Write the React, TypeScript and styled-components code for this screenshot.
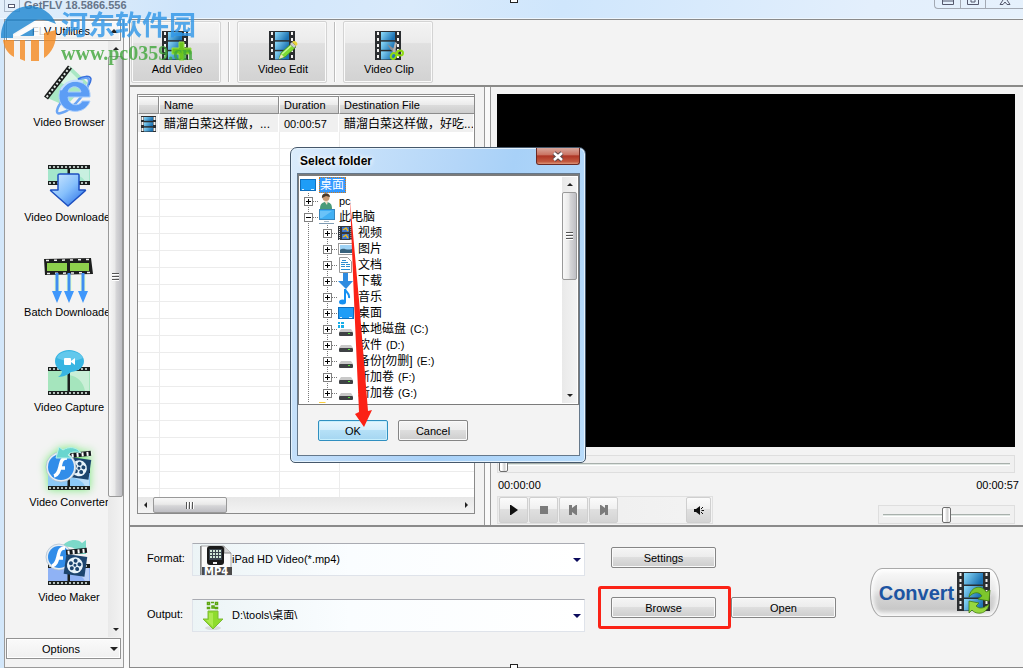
import React from "react";
import styled, { createGlobalStyle, css } from "styled-components";

const Global = createGlobalStyle`
  *, *::before, *::after { box-sizing: border-box; }
  body { margin: 0; }
  body, button, input, select, textarea {
    font-family: "Liberation Sans", "Noto Sans CJK SC", sans-serif;
    font-size: 11px;
    line-height: 14px;
    color: #000;
  }
  button { padding: 0; border: 0; background: none; cursor: pointer; }
  ul { list-style: none; margin: 0; padding: 0; }
  svg { display: block; flex: none; }
`;

/* ---------- window frame ---------- */

const Window = styled.div`
  position: relative;
  display: flex;
  flex-direction: column;
  min-height: 100vh;
  overflow: hidden;
  background: #d3e7fa;
`;

const TitleBar = styled.header`
  display: flex;
  align-items: flex-start;
  height: 19px;
  padding-left: 4px;
  border-bottom: 1px solid #eef6fd;
  background: linear-gradient(100deg, #e3effa 0%, #cfe5fb 18%, #d9eafb 40%, #cfe6fc 55%, #e3effc 85%, #e6f1fc 100%);
`;

const SystemMenu = styled.button`
  display: grid;
  place-items: center;
  width: 16px;
  height: 12px;
  border: 1px solid #a9b8c9;
  border-top: 0;
`;

const WindowTitle = styled.h1`
  flex: 1;
  margin: 0;
  padding-left: 4px;
  font-size: 11px;
  line-height: 11px;
  color: #66758a;
`;

const CaptionButtons = styled.div`
  display: flex;
  height: 9px;
  border: 1px solid #a3a9b3;
  border-width: 0 0 1px 1px;
  border-radius: 0 0 0 4px;
`;

const CaptionButton = styled.button<{ $wide?: boolean }>`
  display: flex;
  justify-content: center;
  width: ${(p) => (p.$wide ? 38 : 25)}px;
  height: 8px;
  overflow: hidden;
  & + & { border-left: 1px solid #a3a9b3; }
`;

const Client = styled.div`
  flex: 1;
  display: flex;
  gap: 5px;
  padding-left: 4px;
  background: linear-gradient(90deg, #d3e7fa 4px, #fafafa 4px);
`;

/* ---------- shared pieces ---------- */

const raised = css`
  background: linear-gradient(#f5f5f5, #ececec 48%, #dedede 50%, #cdcdcd);
  box-shadow: inset 0 0 0 1px #fafafa;
`;

const PushButton = styled.button<{ $primary?: boolean; $small?: boolean }>`
  ${raised}
  width: ${(p) => (p.$small ? 70 : 105)}px;
  height: 21px;
  border: 1px solid #858585;
  border-radius: 2px;
  ${(p) =>
    p.$primary &&
    css`
      border-color: #2f8fc0;
      background: linear-gradient(#e6f5fd, #d3edfb 48%, #b5e0f7 50%, #a5d6f1);
      box-shadow: inset 0 0 0 1px #c8effd;
    `}
`;

const Arrow = styled.span<{ $dir: "up" | "down" | "left" | "right"; $big?: boolean }>`
  width: 0;
  height: 0;
  border: ${(p) => (p.$big ? 4 : 3)}px solid transparent;
  ${(p) => p.$dir === "up" && "border-top-width: 0; border-bottom-color: #222;"}
  ${(p) => p.$dir === "down" && "border-bottom-width: 0; border-top-color: #222;"}
  ${(p) => p.$dir === "left" && "border-left-width: 0; border-right-color: #222;"}
  ${(p) => p.$dir === "right" && "border-right-width: 0; border-left-color: #222;"}
`;

const ScrollTrack = styled.div<{ $horizontal?: boolean }>`
  display: flex;
  flex: none;
  flex-direction: ${(p) => (p.$horizontal ? "row" : "column")};
  ${(p) => (p.$horizontal ? "height: 16px;" : "width: 15px;")}
  background: ${(p) => (p.$horizontal ? "linear-gradient(#e7e7e7, #f3f3f3)" : "linear-gradient(90deg, #e9e9e9, #f3f3f3)")};
`;

const ScrollArrow = styled.button`
  display: grid;
  place-items: center;
  flex: none;
  width: 15px;
  height: 15px;
`;

const ScrollThumb = styled.div<{ $horizontal?: boolean; $size: string }>`
  display: grid;
  place-items: center;
  flex: none;
  ${(p) => (p.$horizontal ? "width" : "height")}: ${(p) => p.$size};
  border: 1px solid #999;
  border-radius: 2px;
  background: linear-gradient(${(p) => (p.$horizontal ? "180deg" : "90deg")}, #f8f8f8, #e9e9e9 45%, #d6d6d8 55%, #bebec3);
`;

const Grip = styled.span<{ $horizontal?: boolean }>`
  ${(p) => (p.$horizontal ? "width: 8px; height: 7px;" : "width: 7px; height: 8px;")}
  background: repeating-linear-gradient(${(p) => (p.$horizontal ? "90deg" : "180deg")}, #555 0 1px, #fff 1px 2px, transparent 2px 3px);
`;

const Fill = styled.div`
  flex: 1;
`;

function ScrollBar(props: { horizontal?: boolean; size: string; label: string }) {
  const h = props.horizontal;
  return (
    <ScrollTrack $horizontal={h}>
      <ScrollArrow aria-label={`${props.label} back`}>
        <Arrow $dir={h ? "left" : "up"} />
      </ScrollArrow>
      <ScrollThumb $horizontal={h} $size={props.size}>
        <Grip $horizontal={h} />
      </ScrollThumb>
      <Fill />
      <ScrollArrow aria-label={`${props.label} forward`}>
        <Arrow $dir={h ? "right" : "down"} />
      </ScrollArrow>
    </ScrollTrack>
  );
}

/* ---------- sidebar ---------- */

const Sidebar = styled.nav`
  display: flex;
  flex-direction: column;
  flex: none;
  width: 120px;
  border: 1px solid #9a9a9a;
  background: #f3f3f3;
`;

const SectionButton = styled.button`
  display: flex;
  align-items: center;
  flex: none;
  height: 21px;
  margin: 0 2px 0 1px;
  padding: 0 2px 0 5px;
  border: 1px solid #929292;
  background: linear-gradient(#fafafa, #f0f0f0);
  box-shadow: inset 0 0 0 1px #fff;
  span:first-child { flex: 1; text-align: center; }
`;

const SidebarBody = styled.div`
  flex: 1;
  display: flex;
  margin-bottom: 1px;
`;

const ToolList = styled.ul`
  flex: 1;
  min-width: 0;
  display: flex;
  flex-direction: column;
  gap: 31px;
  padding-top: 24px;
  overflow: hidden;
`;

const ToolItem = styled.button<{ $active?: boolean }>`
  display: flex;
  flex-direction: column;
  align-items: center;
  width: 128px;
  white-space: nowrap;
  ${(p) => p.$active && "svg { filter: drop-shadow(0 0 4px #7dea7d); }"}
`;

const SidebarFooter = styled.div`
  display: flex;
  flex-direction: column;
  height: 29px;
`;

/* ---------- toolbar ---------- */

const Main = styled.main`
  flex: 1;
  min-width: 0;
  display: flex;
  flex-direction: column;
  border: 1px solid #8a8a8a;
  border-right: 0;
  background: #f3f3f3;
`;

const Toolbar = styled.div`
  display: flex;
  height: 67px;
  padding: 1px 1px 2px;
  border-bottom: 2px solid #8a8a88;
`;

const ToolbarButton = styled.button`
  ${raised}
  display: flex;
  flex-direction: column;
  align-items: center;
  gap: 1px;
  width: 90px;
  height: 62px;
  padding: 9px 0 0 2px;
  border: 1px solid #d3d3d3;
  border-radius: 2px;
  background: linear-gradient(#f3f3f3, #ebebeb 34%, #e0e0e0 36%, #d2d2d2);
`;

const ToolbarDivider = styled.span`
  width: 2px;
  height: 60px;
  margin: 1px 7px;
  background: linear-gradient(90deg, #bdbdbd 1px, #fff 1px);
`;

/* ---------- file list ---------- */

const Workspace = styled.div`
  flex: 1;
  display: flex;
`;

const FilePane = styled.section`
  display: flex;
  flex: none;
  width: 355px;
  padding: 7px 9px 11px 7px;
  border-right: 1px solid #999;
`;

const FileBox = styled.div`
  flex: 1;
  min-width: 0;
  display: flex;
  flex-direction: column;
  border: 1px solid #8a8a8a;
  background: #fff;
`;

const FileGrid = styled.div`
  flex: 1;
  overflow: hidden;
  padding-top: 1px;
  background:
    linear-gradient(90deg, transparent 21px, #ececec 21px 22px, transparent 22px 141px, #ececec 141px 142px, transparent 142px 201px, #ececec 201px 202px, transparent 202px),
    repeating-linear-gradient(transparent 0 2px, #ececec 2px 3px, transparent 3px 17px);
`;

const FileTable = styled.table`
  table-layout: fixed;
  width: 100%;
  border-collapse: separate;
  border-spacing: 0;
  th {
    height: 18px;
    padding: 0 4px;
    border: 1px solid #8c8c8c;
    border-left-color: #fff;
    text-align: left;
    font-weight: 400;
    background: linear-gradient(#fafafa, #ebebeb 48%, #dcdcdc 50%, #cdcdcd);
  }
  th:last-child { border-right: 0; }
  td {
    height: 18px;
    padding: 1px 0 0 5px;
    overflow: hidden;
    white-space: nowrap;
    background: #f0f0f0;
    border-right: 1px solid #fff;
  }
  td:first-child { padding-left: 3px; }
`;

const Cjk = styled.span`
  font-size: 12px;
  line-height: 16px;
`;

const PaneGap = styled.div`
  width: 5px;
  background: #fafafa;
`;

/* ---------- player ---------- */

const Player = styled.section`
  flex: 1;
  min-width: 0;
  display: flex;
  flex-direction: column;
  padding: 7px 4px 1px 6px;
  border-left: 1px solid #999;
`;

const Screen = styled.div`
  flex: 1;
  margin: 0 4px 8px 0;
  background: #000;
`;

const Slider = styled.input<{ $volume?: boolean }>`
  appearance: none;
  display: block;
  height: ${(p) => (p.$volume ? 19 : 18)}px;
  margin: 0 4px 0 0;
  padding: 0 4px;
  border: 1px solid #dedede;
  background: #f0f0f0;
  width: ${(p) => (p.$volume ? "137px" : "auto")};
  ${(p) => !p.$volume && "padding-left: 1px;"}
  &::-webkit-slider-runnable-track {
    height: 16px;
    background: linear-gradient(transparent 7px, #a8b0ac 7px 8px, #dfe6e2 8px 9px, #fff 9px 10px, transparent 10px);
  }
  &::-webkit-slider-thumb {
    appearance: none;
    width: 9px;
    height: 16px;
    border: 1px solid #6d6d6d;
    border-radius: 2px;
    background: linear-gradient(90deg, #fff 2px, #e6e6e6 3px, #cfcfcf 5px, #fff 6px);
  }
`;

const Times = styled.div`
  display: flex;
  justify-content: space-between;
  margin: 5px 0 4px;
  padding-left: 1px;
`;

const Controls = styled.div`
  display: flex;
  justify-content: space-between;
  align-items: flex-end;
`;

const Transport = styled.div`
  display: flex;
  gap: 1px;
  width: 216px;
  height: 28px;
  padding: 0 1px;
  border: 1px solid #e0e0e0;
  background: linear-gradient(90deg, #ececec, #f3f3f3);
`;

const TransportButton = styled.button`
  display: grid;
  place-items: center;
  width: 29px;
  height: 26px;
  border: 1px solid #cfcfcf;
  border-radius: 2px;
  background: linear-gradient(#fbfbfb, #f0f0f0 44%, #e0e0e0 46%, #d4d4d4);
  &:last-child { width: 25px; margin-left: auto; }
`;

/* ---------- output settings ---------- */

const OutputPanel = styled.section`
  display: flex;
  align-items: flex-start;
  padding: 16px 23px 35px 17px;
  border-top: 2px solid #8a8a8a;
`;

const Fields = styled.div`
  flex: 0 1 438px;
  display: grid;
  grid-template-columns: 45px 1fr;
  align-items: center;
  row-gap: 23px;
`;

const FieldLabel = styled.label`
  padding-bottom: 3px;
`;

const Combo = styled.div`
  display: flex;
  align-items: center;
  height: 33px;
  padding: 0 3px 0 7px;
  border: 1px solid #dfe3ea;
  border-top-color: #a9abb2;
  background: linear-gradient(90deg, #ecf4f6, #fafdff 40%, #fff);
`;

const ComboSelect = styled.select`
  appearance: none;
  flex: 1;
  min-width: 0;
  height: 20px;
  padding: 0 0 2px;
  border: 0;
  outline: 0;
  background: transparent;
`;

const ComboArrow = styled.span`
  border: 4px solid transparent;
  border-top-color: #0b0b5c;
  border-bottom: 0;
`;

const Actions = styled.div`
  display: grid;
  grid-template-columns: 105px 105px;
  gap: 29px 15px;
  padding: 4px 0 0 26px;
`;

const Highlighted = styled.div`
  grid-column: 1;
  position: relative;
  &::after {
    content: "";
    position: absolute;
    inset: -11px -15px -11px -13px;
    border: 3px solid #fb2216;
    border-radius: 3px;
    pointer-events: none;
  }
`;

const ConvertButton = styled.button`
  display: flex;
  align-items: center;
  justify-content: center;
  gap: 3px;
  width: 130px;
  height: 49px;
  margin: 25px 0 0 auto;
  border: 1px solid #a9a9a9;
  border-radius: 12px / 22px;
  background: linear-gradient(#fafafa, #e8e8e8 45%, #d4d4d4 60%, #c8c8c8 85%, #e4e4e4);
  box-shadow: inset 0 0 5px 2px #fff;
  font-size: 20px;
  font-weight: 700;
  color: #1d54a2;
`;

/* ---------- select folder dialog ---------- */

const Dialog = styled.div`
  position: absolute;
  left: 290px;
  top: 147px;
  width: 296px;
  display: flex;
  flex-direction: column;
  padding: 0 5px 6px 6px;
  border: 1px solid #46586b;
  border-radius: 7px 7px 5px 5px;
  background: linear-gradient(105deg, #dcecfb 0%, #c5e0fa 20%, #b4d6f8 45%, #a8d1f8 60%, #b9dcfb 100%);
  box-shadow: inset 0 0 0 1px #e4f2fd;
`;

const DialogHead = styled.div`
  display: flex;
  justify-content: space-between;
  height: 25px;
`;

const DialogTitle = styled.h2`
  margin: 0;
  padding: 6px 0 0 3px;
  font-size: 12px;
  line-height: 14px;
  text-shadow: 0 0 5px #fff, 0 0 5px #fff;
`;

const CloseButton = styled.button`
  display: grid;
  place-items: center;
  width: 44px;
  height: 17px;
  border: 1px solid #6b2a25;
  border-top: 0;
  border-radius: 0 0 3px 3px;
  background: linear-gradient(#d9a79c, #c9705e 45%, #ad3424 48%, #c2593f 85%, #dd9679);
`;

const DialogBody = styled.div`
  border: 1px solid #65788b;
  background: #f3f3f3;
`;

const TreeBox = styled.div`
  display: flex;
  height: 231px;
  padding: 1px 1px 1px 0;
  border: 1px solid #7b7b7b;
  border-top-width: 2px;
  background: #fff;
`;

const Tree = styled.ul`
  flex: 1;
  overflow: hidden;
`;

const TreeRow = styled.li`
  display: flex;
  align-items: center;
  height: 16px;
  white-space: nowrap;
`;

const Guide = styled.span<{ $branch?: boolean }>`
  display: grid;
  place-items: center;
  width: 19px;
  height: 16px;
  background:
    repeating-linear-gradient(#777 0 1px, transparent 1px 2px) 9px 0 / 1px 16px no-repeat
    ${(p) => p.$branch && ", repeating-linear-gradient(90deg, #777 0 1px, transparent 1px 2px) 14px 8px / 6px 1px no-repeat"};
`;

const Expander = styled.button<{ $open?: boolean }>`
  width: 9px;
  height: 9px;
  border: 1px solid #808080;
  background:
    linear-gradient(#000, #000) center / 5px 1px no-repeat,
    ${(p) => !p.$open && "linear-gradient(#000, #000) center / 1px 5px no-repeat,"}
    #fff;
`;

const TreeLabel = styled.span<{ $selected?: boolean }>`
  display: flex;
  gap: 4px;
  align-items: center;
  margin-left: ${(p) => (p.$selected ? 3 : 4)}px;
  line-height: 16px;
  ${(p) =>
    p.$selected &&
    css`
      padding: 0 2px 0 1px;
      background: #3399ff;
      color: #fff;
      outline: 1px dotted #d07a1c;
      outline-offset: -1px;
    `}
`;

const DialogFoot = styled.div`
  display: flex;
  gap: 10px;
  padding: 15px 20px 14px;
`;

/* ---------- overlays ---------- */

const Pointer = styled.svg`
  position: absolute;
  left: 345px;
  top: 198px;
  pointer-events: none;
`;

const Watermark = styled.div`
  position: absolute;
  left: 0;
  top: 6px;
  display: flex;
  gap: 4px;
  opacity: 0.8;
  pointer-events: none;
`;

const WatermarkName = styled.div`
  font: 700 27px/36px "Noto Sans CJK SC", sans-serif;
  color: #2e96e8;
`;

const WatermarkSite = styled.div`
  font: 700 20px/22px "Liberation Serif", serif;
  color: #3fa63a;
`;

const ResizeMark = styled.span<{ $bottom?: boolean }>`
  position: absolute;
  left: calc(50% - 2px);
  ${(p) => (p.$bottom ? "bottom: -4px;" : "top: -5px;")}
  width: 8px;
  height: 8px;
  border: 1px solid #222;
  background: #fff;
`;

/* ---------- drawings ---------- */

function FilmStrip({ x = 0, y = 0, w = 26, h = 29, id }: { x?: number; y?: number; w?: number; h?: number; id: string }) {
  const count = Math.floor(h / 5);
  const step = h / count;
  const side = Math.round(w * 0.22);
  const frame = h / 3;
  return (
    <g transform={`translate(${x} ${y})`}>
      <defs>
        <linearGradient id={id} x1="0" y1="0" x2="1" y2="0.4">
          <stop offset="0" stopColor="#8edcfb" />
          <stop offset="1" stopColor="#1d73b3" />
        </linearGradient>
      </defs>
      <rect width={w} height={h} fill="#2b2e31" />
      {Array.from({ length: count }, (_, i) => (
        <g key={i} fill="#f4f4f4">
          <rect x={side / 2 - 1} y={Math.round(i * step + 1)} width="2" height="3" />
          <rect x={w - side / 2 - 1} y={Math.round(i * step + 1)} width="2" height="3" />
        </g>
      ))}
      {[0, 1, 2].map((i) => (
        <rect key={i} x={side} y={i * frame + 1} width={w - 2 * side} height={frame - 1.5} fill={`url(#${id})`} />
      ))}
    </g>
  );
}

const AddVideoIcon = () => (
  <svg width="30" height="30" viewBox="0 0 30 30">
    <FilmStrip id="fa" />
    <path d="M17 11h5v6h7v6h-7v6h-5v-6h-7v-6h7z" fill="#6cc51e" stroke="#9be04c" />
  </svg>
);

const EditVideoIcon = () => (
  <svg width="30" height="30" viewBox="0 0 30 30">
    <FilmStrip id="fe" x={1} />
    <path d="M11 28l2-6L24 12l4 4-11 10z" fill="#7ddb33" stroke="#3f8d18" strokeWidth=".7" />
    <path d="M14 23L25 13" stroke="#c9f79a" strokeWidth="1.5" />
    <path d="M22 13l2-2 4 4-2 2z" fill="#ccc" stroke="#777" strokeWidth=".5" />
    <path d="M24 11l1.500-1c2-.5 4 1.500 4 3.500L28 15z" fill="#e8d43c" />
    <path d="M11 28l2-5 3 3z" fill="#f1e4b5" />
  </svg>
);

const ClipVideoIcon = () => (
  <svg width="30" height="30" viewBox="0 0 30 30">
    <FilmStrip id="fc" x={1} />
    <path d="M13 13l9 6 3 3-3 1-5-4z" fill="#8f8f8f" />
    <path d="M21 11l2 1-2 9-3 2z" fill="#b5b5b5" />
    <ellipse cx="19.500" cy="25" rx="2.500" ry="3" fill="none" stroke="#8edb12" strokeWidth="2" transform="rotate(30 19.500 25)" />
    <ellipse cx="26" cy="22" rx="3" ry="2.500" fill="none" stroke="#8edb12" strokeWidth="2" />
  </svg>
);

function GreenFilm({ y, h, tint = "#a4e6cb" }: { y: number; h: number; tint?: string }) {
  return (
    <g>
      <rect x="11" y={y} width="42" height={h} fill={tint} />
      <path d={`M32 ${y + 4}h20v${h - 8}h-4q-3-${h - 14}-16-${h - 12}z`} fill="#fff" opacity=".4" />
      <rect x="11" y={y} width="42" height="4" fill="#1b1f1e" />
      <rect x="11" y={y + h - 4} width="42" height="4" fill="#1b1f1e" />
      <rect x="30.500" y={y} width="2.500" height={h} fill="#1b1f1e" />
      <path d={`M12 ${y + 2}h40M12 ${y + h - 2}h40`} stroke="#e8f5ef" strokeWidth="1.500" strokeDasharray="2 2" />
    </g>
  );
}

const BrowserIcon = () => (
  <svg width="64" height="50" viewBox="0 0 64 50">
    <path d="M33 1l18 17-22 23L8 32z" fill="#a9e8c4" />
    <path d="M32 5l14 14-13 4-10-6z" fill="#d8f6e4" />
    <path d="M33 2L9 33" stroke="#191c1b" strokeWidth="5" />
    <path d="M33 2L9 33" stroke="#e5eee9" strokeWidth="2" strokeDasharray="2 2" />
    <path d="M25 36c-6 8-7 14-1 12 6-1 14-8 21-17s9-17 5-18c-2-1-5 0-9 2" fill="none" stroke="#6aa5f5" strokeWidth="2.500" />
    <path d="M53 32H31c0 9 12 10 14 4h8c-5 16-32 13-31-6 1-19 33-18 31 2zM31 27h13c-1-7-12-7-13 0z" fill="#5c9df5" stroke="#a7cdfd" />
    <path d="M24 25c4-8 14-12 22-8" fill="none" stroke="#c3ddff" strokeWidth="2" />
    <path d="M41 14c5-3 12-4 13 0 0 2-1 4-2 6" fill="none" stroke="#3a72dd" strokeWidth="1.500" />
  </svg>
);

const DownloaderIcon = () => (
  <svg width="64" height="50" viewBox="0 0 64 50">
    <defs>
      <linearGradient id="dl" x1="0" y1="0" x2="1" y2="1">
        <stop offset="0" stopColor="#d4ebff" />
        <stop offset=".5" stopColor="#86c0fc" />
        <stop offset="1" stopColor="#1c64e4" />
      </linearGradient>
    </defs>
    <GreenFilm y={5} h={20} />
    <path d="M23 14h18q1 0 1 1v15h6q1 0 0 1L31 46 14 31q-1-1 0-1h7V15q0-1 2-1z" fill="url(#dl)" stroke="#1c4fc0" strokeWidth="1.500" strokeLinejoin="round" />
  </svg>
);

const BatchIcon = () => (
  <svg width="64" height="50" viewBox="0 0 64 50">
    <path d="M7 4l47-1 2 16-48 1z" fill="#1c1e1d" />
    <path d="M9 5.500l45-1M10 18.500l44-1" stroke="#eee" strokeWidth="1.500" strokeDasharray="3 5" />
    <rect x="10" y="8" width="20" height="8" fill="#8ed04d" />
    <rect x="33" y="8" width="19" height="8" fill="#8ed04d" />
    <path d="M20 20v20M32 20v20M46 20v20" stroke="#e8fbd8" strokeWidth="6" />
    <path d="M20 18v20M32 18v20M46 18v20" stroke="#3f8ff0" strokeWidth="3" />
    <path d="M15 36h10l-5 12zM27 36h10l-5 12zM41 36h10l-5 12z" fill="#3f97fb" />
  </svg>
);

const CaptureIcon = () => (
  <svg width="64" height="50" viewBox="0 0 64 50">
    <GreenFilm y={17} h={28} tint="#a5e5bd" />
    <path d="M32 0c8 0 15 5 15 11s-5 10-13 11c-2 2-7 5-13 5 3-2 4-4 4-6-5-2-7-6-7-10C18 5 24 0 32 0z" fill="#38b5e2" />
    <path d="M20 8c2-9 22-9 26 0-8 4-18 4-26 0z" fill="#7fd6f3" opacity=".6" />
    <rect x="27" y="8" width="7" height="7" rx="1" fill="#fff" />
    <path d="M34 11l4-3v7l-4-3z" fill="#fff" />
  </svg>
);

function Clapper({ x, y }: { x: number; y: number }) {
  return (
    <g transform={`translate(${x} ${y}) rotate(8)`}>
      <rect y="4" width="21" height="20" fill="#1d456f" />
      <rect width="21" height="5" fill="#15191d" transform="rotate(-14 0 5)" />
      <path d="M1 2.500l20-5" stroke="#fff" strokeWidth="4" strokeDasharray="2 3" />
      <circle cx="10" cy="14" r="8" fill="#e9f4fb" />
      <g fill="#1d456f">
        <circle cx="10" cy="14" r="1.500" />
        <circle cx="10" cy="9.500" r="2" />
        <circle cx="14.300" cy="12.500" r="2" />
        <circle cx="12.700" cy="17.500" r="2" />
        <circle cx="7.300" cy="17.500" r="2" />
        <circle cx="5.700" cy="12.500" r="2" />
      </g>
    </g>
  );
}

const FlashDisc = ({ cx, cy, r }: { cx: number; cy: number; r: number }) => (
  <g>
    <circle cx={cx} cy={cy} r={r} fill="#e8eef4" stroke="#a9bccb" strokeWidth=".7" />
    <circle cx={cx} cy={cy} r={r - 2} fill="#318de9" />
    <path d={`M${cx + 6} ${cy - 9}c-6 0-6 5-7 9s-2 8-6 9M${cx - 2} ${cy + 1}h6`} fill="none" stroke="#fff" strokeWidth="3.500" />
  </g>
);

const ConverterIcon = () => (
  <svg width="64" height="50" viewBox="0 0 64 50" overflow="visible">
    <GreenFilm y={24} h={21} tint="#8cc9f7" />
    <Clapper x={34} y={8} />
    <FlashDisc cx={24} cy={22} r={15} />
    <path d="M19 13l3-11 4 3c6-4 14-3 18 3-6-2-11-1-13 2l4 3z" fill="#69d6cf" stroke="#b7f1e9" />
  </svg>
);

const MakerIcon = () => (
  <svg width="64" height="50" viewBox="0 0 64 50" overflow="visible">
    <GreenFilm y={24} h={21} tint="#8fb2f5" />
    <path d="M24 8c5-9 17-10 21-5l4-3v14H35l4-4c-4-4-10-4-15-2z" fill="#7cd9c9" />
    <FlashDisc cx={22} cy={17} r={13} />
    <Clapper x={30} y={10} />
  </svg>
);

const Mp4Icon = () => (
  <svg width="32" height="30" viewBox="0 0 32 30">
    <path d="M1 1h23l7 7v21H1z" fill="#fafafa" stroke="#aaa" />
    <path d="M0 1v29" stroke="#888" strokeWidth="3" />
    <path d="M24 1v7h7" fill="#d5d5d5" stroke="#888" />
    <rect x="7" y="1" width="17" height="19" rx="3" fill="#1a1a1a" />
    <rect x="9" y="4" width="13" height="11" fill="#39434c" />
    <path d="M10 6h11M10 9h11M10 12h11" stroke="#cfe6d6" strokeWidth="2" strokeDasharray="2 1" />
    <rect x="13" y="17" width="4" height="2" fill="#eee" />
    <rect x="2" y="22" width="30" height="8" fill="#4b4b4b" />
    <text x="4" y="30" fontFamily="DejaVu Sans" fontSize="10" fontWeight="700" fill="#fff">MP4</text>
  </svg>
);

const OutputIcon = () => (
  <svg width="32" height="30" viewBox="0 0 32 30">
    <ellipse cx="13" cy="27" rx="8" ry="2" fill="#ccc" opacity=".6" />
    <path d="M8 10h10v8h5L13 28 3 18h5z" fill="#8edc2c" stroke="#7cba35" />
    <path d="M9 12h4v14L6 19h3z" fill="#b9f060" opacity=".7" />
    <g fill="none" stroke="#5ba610" strokeWidth="1.500">
      <path d="M7.500 1.500h2v2h-2zM15.500 1.500h2v2h-2zM12 5h2v2h-2zM7.500 6.500h2v1h-2zM15.500 6.500h2v1h-2zM11 1.500h3" />
    </g>
  </svg>
);

const ConvertIcon = () => (
  <svg width="34" height="42" viewBox="0 0 34 42">
    <FilmStrip id="fv" w={33} h={39} />
    <path d="M12 25c2-12 14-12 17-5l4-2-1 11-11-2 4-3c-3-5-9-4-13 1z" fill="#7dc62c" stroke="#417d10" strokeWidth=".8" />
    <path d="M32 32c-2 11-13 11-17 6l-3 3V29l10 2-3 3c3 3 8 3 13-2z" fill="#97d83f" stroke="#417d10" strokeWidth=".8" />
  </svg>
);

type TreeIconKind = "desktop" | "user" | "pc" | "video" | "image" | "doc" | "download" | "music" | "system" | "drive" | "folder";

function TreeIcon({ kind }: { kind: TreeIconKind }) {
  return (
    <svg width="17" height="16" viewBox="0 0 17 16">
      {kind === "desktop" && (
        <>
          <rect x="1.500" y="2.500" width="15" height="11" fill="#1e9df7" stroke="#0f6fbd" />
          <path d="M3 12.500h2M12 12.500h3" stroke="#d9f0ff" />
        </>
      )}
      {kind === "user" && (
        <>
          <path d="M2 16c0-5 2-7 6-7s6 2 6 7z" fill="#4a9b7a" />
          <path d="M6 8h4l-1 4z" fill="#f2dfc8" />
          <circle cx="8" cy="4.500" r="3.500" fill="#c79a75" />
          <path d="M4 5c-1-6 8-6 8-1l-4-1z" fill="#4b3a2b" />
        </>
      )}
      {kind === "pc" && (
        <>
          <rect x="1.500" y=".5" width="15" height="10" fill="#41b0f4" stroke="#3686be" />
          <path d="M2 2h12L4 9H2z" fill="#86d0fa" opacity=".6" />
          <path d="M6 12.500h5" stroke="#a7bac8" />
          <path d="M1 14.500h15" stroke="#7f9cb4" />
        </>
      )}
      {kind === "video" && (
        <>
          <rect x="1" y="1" width="14" height="14" fill="#33383f" />
          <path d="M2.500 2v13M14 2v13" stroke="#ddd" strokeDasharray="1 1" />
          <rect x="5" y="2" width="7" height="5" fill="#3975d3" />
          <rect x="5" y="9" width="7" height="5" fill="#3975d3" />
          <path d="M6 5l3-2 2 3M6 12l3-2 2 3" stroke="#e9b820" strokeWidth="1.500" fill="none" />
        </>
      )}
      {kind === "image" && (
        <>
          <rect x="1.500" y="2.500" width="15" height="11" fill="#fff" stroke="#9a9a9a" />
          <rect x="3" y="4" width="12" height="8" fill="#9fd3f5" />
          <path d="M3 9c4-3 6 1 12-1v4H3z" fill="#37617c" />
        </>
      )}
      {kind === "doc" && (
        <>
          <path d="M2.500.500h8l4 4v11h-12z" fill="#fff" stroke="#999" />
          <path d="M5 3.500h4M4 5.500h7M4 7.500h4M9 7.500h4M4 9.500h4M9 9.500h4M4 12.500h9" stroke="#2c8dd0" />
        </>
      )}
      {kind === "download" && <path d="M6 0h5v8h5l-7 8-8-8h5z" fill="#2f8be0" />}
      {kind === "music" && (
        <>
          <path d="M8 13V0c1 4 5 4 4 9" fill="none" stroke="#1590f2" strokeWidth="2" />
          <ellipse cx="5.500" cy="13" rx="3.500" ry="2.500" fill="#1590f2" />
        </>
      )}
      {(kind === "drive" || kind === "system") && (
        <>
          <path d="M4 8h10l2 3H2z" fill="#c9c9c9" />
          <rect x="2" y="11" width="14" height="4" rx="1" fill="#3f4245" />
          <rect x="11" y="12" width="2" height="1" fill="#55e03a" />
        </>
      )}
      {kind === "system" && <path d="M1 1h2v2H1zM4 1h3v2H4zM1 4h2v3H1zM4 4h3v3H4z" fill="#18aee8" />}
      {kind === "folder" && <path d="M1 1h6l2 2h7v11H1z" fill="#fbce3c" />}
    </svg>
  );
}

/* ---------- data ---------- */

const tools = [
  { name: "Video Browser", Icon: BrowserIcon },
  { name: "Video Downloader", Icon: DownloaderIcon },
  { name: "Batch Downloader", Icon: BatchIcon },
  { name: "Video Capture", Icon: CaptureIcon },
  { name: "Video Converter", Icon: ConverterIcon, active: true },
  { name: "Video Maker", Icon: MakerIcon },
];

const toolbar = [
  { name: "Add Video", Icon: AddVideoIcon },
  { name: "Video Edit", Icon: EditVideoIcon },
  { name: "Video Clip", Icon: ClipVideoIcon },
];

const folders: { level: number; icon: TreeIconKind; name?: string; drive?: string; open?: boolean }[] = [
  { level: 0, icon: "desktop", name: "桌面" },
  { level: 1, icon: "user", drive: "pc" },
  { level: 1, icon: "pc", name: "此电脑", open: true },
  { level: 2, icon: "video", name: "视频" },
  { level: 2, icon: "image", name: "图片" },
  { level: 2, icon: "doc", name: "文档" },
  { level: 2, icon: "download", name: "下载" },
  { level: 2, icon: "music", name: "音乐" },
  { level: 2, icon: "desktop", name: "桌面" },
  { level: 2, icon: "system", name: "本地磁盘", drive: "(C:)" },
  { level: 2, icon: "drive", name: "软件", drive: "(D:)" },
  { level: 2, icon: "drive", name: "备份[勿删]", drive: "(E:)" },
  { level: 2, icon: "drive", name: "新加卷", drive: "(F:)" },
  { level: 2, icon: "drive", name: "新加卷", drive: "(G:)" },
];

/* ---------- screens ---------- */

function FolderDialog() {
  return (
    <Dialog role="dialog" aria-labelledby="dlg-title">
      <DialogHead>
        <DialogTitle id="dlg-title">Select folder</DialogTitle>
        <CloseButton aria-label="Close">
          <svg width="14" height="11" viewBox="0 0 14 11">
            <path d="M3 2l8 7M11 2l-8 7" stroke="#5a4a4c" strokeWidth="4.500" />
            <path d="M3 2l8 7M11 2l-8 7" stroke="#fff" strokeWidth="2.500" />
          </svg>
        </CloseButton>
      </DialogHead>
      <DialogBody>
        <TreeBox>
          <Tree>
            {folders.map((f, i) => (
              <TreeRow key={i}>
                {f.level === 2 && <Guide />}
                {f.level > 0 && (
                  <Guide $branch>
                    <Expander $open={f.open} aria-label={`Toggle ${f.name ?? f.drive}`} />
                  </Guide>
                )}
                <TreeIcon kind={f.icon} />
                <TreeLabel $selected={f.level === 0}>
                  {f.name && <Cjk>{f.name}</Cjk>}
                  {f.drive && <span>{f.drive}</span>}
                </TreeLabel>
              </TreeRow>
            ))}
            <TreeRow>
              <Guide />
              <TreeIcon kind="folder" />
            </TreeRow>
          </Tree>
          <ScrollBar size="88px" label="Folders" />
        </TreeBox>
        <DialogFoot>
          <PushButton $primary $small>OK</PushButton>
          <PushButton $small>Cancel</PushButton>
        </DialogFoot>
      </DialogBody>
    </Dialog>
  );
}

function PlayerPane() {
  return (
    <Player aria-label="Player">
      <Screen />
      <Slider type="range" aria-label="Position" min={0} max={57} defaultValue={0} />
      <Times>
        <span>00:00:00</span>
        <span>00:00:57</span>
      </Times>
      <Controls>
        <Transport>
          <TransportButton aria-label="Play">
            <svg width="10" height="10" viewBox="0 0 10 10"><path d="M1 0h1l7 5-7 5H1z" fill="#111" /></svg>
          </TransportButton>
          <TransportButton aria-label="Stop">
            <svg width="8" height="8" viewBox="0 0 8 8"><path d="M0 0h8v8H0z" fill="#7b7b7b" /></svg>
          </TransportButton>
          <TransportButton aria-label="Previous">
            <svg width="9" height="10" viewBox="0 0 9 10"><path d="M0 0h3v3l4-3h1v10H7L3 7v3H0z" fill="#7b7b7b" /></svg>
          </TransportButton>
          <TransportButton aria-label="Next">
            <svg width="9" height="10" viewBox="0 0 9 10"><path d="M9 0H6v3L2 0H1v10h1l4-3v3h3z" fill="#7b7b7b" /></svg>
          </TransportButton>
          <TransportButton aria-label="Mute">
            <svg width="10" height="9" viewBox="0 0 10 9">
              <path d="M0 3h2l4-3v9L2 6H0z" fill="#111" />
              <path d="M7 3l2-2M7.500 4.500H10M7 6l2 2" stroke="#111" />
            </svg>
          </TransportButton>
        </Transport>
        <Slider $volume type="range" aria-label="Volume" min={0} max={100} defaultValue={50} />
      </Controls>
    </Player>
  );
}

export default function App() {
  return (
    <Window>
      <Global />
      <TitleBar>
        <SystemMenu aria-label="System menu">
          <svg width="8" height="6" viewBox="0 0 8 6"><rect x=".5" y="1.500" width="6" height="3" fill="#fff" stroke="#555a70" /></svg>
        </SystemMenu>
        <WindowTitle>GetFLV 18.5866.556</WindowTitle>
        <CaptionButtons>
          <CaptionButton aria-label="Minimize">
            <svg width="12" height="6" viewBox="0 0 12 6"><path d="M.500 0v4.500h11V0M.500 1h11" fill="none" stroke="#55586c" /></svg>
          </CaptionButton>
          <CaptionButton aria-label="Maximize">
            <svg width="12" height="6" viewBox="0 0 12 6"><path d="M.500 0v4.500h11V0M4 0v2h4V0" fill="none" stroke="#55586c" /></svg>
          </CaptionButton>
          <CaptionButton $wide aria-label="Close window">
            <svg width="12" height="6" viewBox="0 0 12 6"><path d="M4 0L1 4.500h3L6 2l2 2.500h3L8 0" fill="none" stroke="#55586c" /></svg>
          </CaptionButton>
        </CaptionButtons>
      </TitleBar>

      <Client>
        <Sidebar>
          <SectionButton>
            <span>FLV Utilities</span>
            <Arrow $dir="up" $big />
          </SectionButton>
          <SidebarBody>
            <ToolList>
              {tools.map(({ name, Icon, active }) => (
                <li key={name}>
                  <ToolItem $active={active}>
                    <Icon />
                    {name}
                  </ToolItem>
                </li>
              ))}
            </ToolList>
            <ScrollBar size="74%" label="Utilities" />
          </SidebarBody>
          <SidebarFooter>
            <SectionButton>
              <span>Options</span>
              <Arrow $dir="down" $big />
            </SectionButton>
          </SidebarFooter>
        </Sidebar>

        <Main>
          <Toolbar>
            {toolbar.map(({ name, Icon }, i) => (
              <React.Fragment key={name}>
                {i > 0 && <ToolbarDivider />}
                <ToolbarButton>
                  <Icon />
                  {name}
                </ToolbarButton>
              </React.Fragment>
            ))}
          </Toolbar>

          <Workspace>
            <FilePane aria-label="Files">
              <FileBox>
                <FileGrid>
                  <FileTable>
                    <colgroup>
                      <col style={{ width: 21 }} />
                      <col style={{ width: 120 }} />
                      <col style={{ width: 60 }} />
                      <col />
                    </colgroup>
                    <thead>
                      <tr>
                        <th aria-label="Type" />
                        <th>Name</th>
                        <th>Duration</th>
                        <th>Destination File</th>
                      </tr>
                    </thead>
                    <tbody>
                      <tr>
                        <td>
                          <svg width="15" height="16" viewBox="0 0 15 16"><FilmStrip id="fr" w={15} h={16} /></svg>
                        </td>
                        <td><Cjk>醋溜白菜这样做，...</Cjk></td>
                        <td>00:00:57</td>
                        <td><Cjk>醋溜白菜这样做，好吃...</Cjk></td>
                      </tr>
                    </tbody>
                  </FileTable>
                </FileGrid>
                <ScrollBar horizontal size="74px" label="Files" />
              </FileBox>
            </FilePane>
            <PaneGap />
            <PlayerPane />
          </Workspace>

          <OutputPanel aria-label="Output settings">
            <Fields>
              <FieldLabel htmlFor="format">Format:</FieldLabel>
              <Combo>
                <Mp4Icon />
                <ComboSelect id="format"><option>iPad HD Video(*.mp4)</option></ComboSelect>
                <ComboArrow />
              </Combo>
              <FieldLabel htmlFor="output">Output:</FieldLabel>
              <Combo>
                <OutputIcon />
                <ComboSelect id="output"><option>{"D:\\tools\\桌面\\"}</option></ComboSelect>
                <ComboArrow />
              </Combo>
            </Fields>
            <Actions>
              <PushButton>Settings</PushButton>
              <Highlighted><PushButton>Browse</PushButton></Highlighted>
              <PushButton>Open</PushButton>
            </Actions>
            <ConvertButton>
              Convert
              <ConvertIcon />
            </ConvertButton>
          </OutputPanel>
        </Main>
      </Client>

      <FolderDialog />
      <Pointer width="32" height="234" viewBox="0 0 32 234">
        <path d="M5 2L14 102 23 213l4-1-8 17-9-13 4-2L9 102z" fill="#fb2216" />
      </Pointer>

      <Watermark>
        <svg width="57" height="58" viewBox="0 0 57 58">
          <path d="M1 28C3 10 16 0 30 0c11 0 22 7 26 18-8-4-14-5-20-4L13 28v4H1z" fill="#1c86d1" />
          <path d="M14 29l24-14c3 0 5 1 6 3v12H14z" fill="#fff" />
          <path d="M20 30l14-8v8z" fill="#1c86d1" />
          <path d="M3 34h11v17C7 47 4 41 3 34zM20 34h5v21l-5-2zM31 34h8v21h-8zM44 27l12-3c1 13-4 23-12 28z" fill="#f58a1f" />
        </svg>
        <div>
          <WatermarkName>河东软件园</WatermarkName>
          <WatermarkSite>www.pc0359.cn</WatermarkSite>
        </div>
      </Watermark>
      <ResizeMark />
      <ResizeMark $bottom />
    </Window>
  );
}
